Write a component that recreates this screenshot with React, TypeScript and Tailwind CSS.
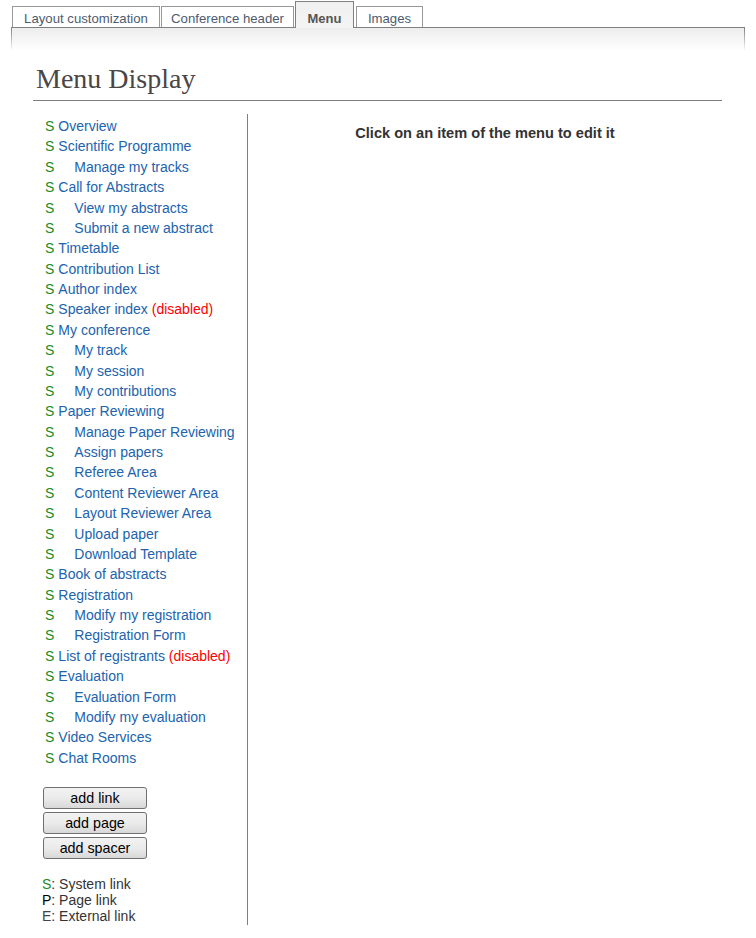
import React from "react";

type Item = { label: string; sub?: boolean; disabled?: boolean };

const items: Item[] = [
  { label: "Overview" },
  { label: "Scientific Programme" },
  { label: "Manage my tracks", sub: true },
  { label: "Call for Abstracts" },
  { label: "View my abstracts", sub: true },
  { label: "Submit a new abstract", sub: true },
  { label: "Timetable" },
  { label: "Contribution List" },
  { label: "Author index" },
  { label: "Speaker index", disabled: true },
  { label: "My conference" },
  { label: "My track", sub: true },
  { label: "My session", sub: true },
  { label: "My contributions", sub: true },
  { label: "Paper Reviewing" },
  { label: "Manage Paper Reviewing", sub: true },
  { label: "Assign papers", sub: true },
  { label: "Referee Area", sub: true },
  { label: "Content Reviewer Area", sub: true },
  { label: "Layout Reviewer Area", sub: true },
  { label: "Upload paper", sub: true },
  { label: "Download Template", sub: true },
  { label: "Book of abstracts" },
  { label: "Registration" },
  { label: "Modify my registration", sub: true },
  { label: "Registration Form", sub: true },
  { label: "List of registrants", disabled: true },
  { label: "Evaluation" },
  { label: "Evaluation Form", sub: true },
  { label: "Modify my evaluation", sub: true },
  { label: "Video Services" },
  { label: "Chat Rooms" },
];

function Tab({ label, active, className }: { label: string; active?: boolean; className: string }) {
  if (active) {
    return (
      <div className={"relative z-10 mb-[-1px] h-[27px] pt-[9px] text-center border border-b-0 border-[#808080] bg-gradient-to-b from-[#f0f0f0] to-[#f4f4f4] text-[13px] font-bold text-[#555] leading-[16px] " + className}>
        {label}
      </div>
    );
  }
  return (
    <div className={"h-[21px] pt-[4px] text-center border border-b-0 border-[#999] bg-white text-[13.2px] text-[#4d5b70] leading-[16px] whitespace-nowrap " + className}>
      {label}
    </div>
  );
}

function Btn({ label }: { label: string }) {
  return (
    <button className="w-[104px] h-[22px] rounded-[3px] border border-[#707070] bg-gradient-to-b from-[#f2f2f2] via-[#ebebeb] to-[#d8d8d8] text-[14.3px] leading-[20px] text-black">
      {label}
    </button>
  );
}

export default function App() {
  return (
    <div className="w-[756px] min-h-[938px] bg-white font-['Liberation_Sans',Arial,sans-serif]">
      <div className="flex items-end h-[27px] pl-[12px]">
        <Tab label="Layout customization" className="w-[148px]" />
        <Tab label="Conference header" className="ml-[1px] w-[133px]" />
        <Tab label="Menu" active className="ml-[1px] w-[59px]" />
        <Tab label="Images" className="ml-[2px] w-[67px]" />
      </div>
      <div className="mx-[11px] flex h-[24px] border-t border-[#808080]">
        <div className="w-px bg-gradient-to-b from-[#808080] to-white" />
        <div className="flex-1 bg-gradient-to-b from-[#ededed] to-white" />
        <div className="w-px bg-gradient-to-b from-[#808080] to-white" />
      </div>
      <div className="ml-[33px] mr-[34px]">
        <div className="mt-[12px] pl-[3px] pb-[5px] border-b border-[#808080] font-['Liberation_Serif','Times_New_Roman',serif] text-[28px] leading-[32px] text-[#4b4646]">
          Menu Display
        </div>
        <div className="mt-[13px] flex">
          <div className="w-[215px] border-r border-[#808080] pt-[2px] pb-[1px]">
            <div className="pl-[12px]">
              {items.map((it, i) => (
                <div key={i} className="flex text-[14px] leading-[20.38px] whitespace-nowrap">
                  <span className="text-[#1e8a1e]">S</span>
                  <span className={it.sub ? "pl-[20px] text-[#2163ad]" : "pl-[4px] text-[#2163ad]"}>
                    {it.label}
                    {it.disabled && <span className="text-[#ff0000]"> (disabled)</span>}
                  </span>
                </div>
              ))}
            </div>
            <div className="mt-[19px] ml-[10px] flex flex-col gap-[3px]">
              <Btn label="add link" />
              <Btn label="add page" />
              <Btn label="add spacer" />
            </div>
            <div className="mt-[17px] ml-[9px] text-[14px] leading-[16px] text-[#333]">
              <div>
                <span className="text-[#1e8a1e]">S</span>: System link
              </div>
              <div>
                <span className="text-black">P</span>: Page link
              </div>
              <div>
                <span className="text-[#444]">E</span>: External link
              </div>
            </div>
          </div>
          <div className="flex-1 pt-[9px] text-center text-[14.6px] leading-[20px] font-bold text-[#333]">
            Click on an item of the menu to edit it
          </div>
        </div>
      </div>
    </div>
  );
}
